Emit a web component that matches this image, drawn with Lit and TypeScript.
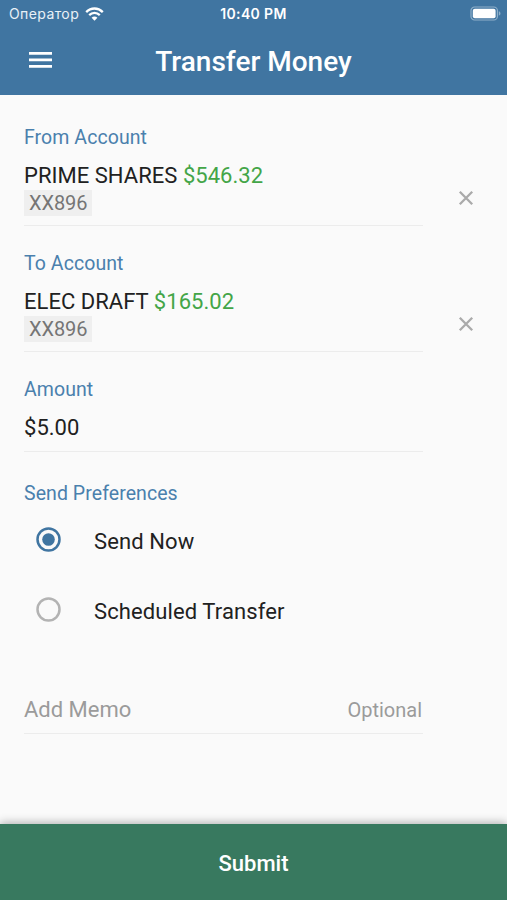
import { LitElement, html, css } from "lit";
import { customElement, state } from "lit/decorators.js";
import { classMap } from "lit/directives/class-map.js";

interface Account {
  label: string;
  name: string;
  balance: string;
  mask: string;
}

const accounts: Account[] = [
  { label: "From Account", name: "PRIME SHARES", balance: "$546.32", mask: "XX896" },
  { label: "To Account", name: "ELEC DRAFT", balance: "$165.02", mask: "XX896" },
];

const preferences = ["Send Now", "Scheduled Transfer"];

@customElement("app-root")
export class AppRoot extends LitElement {
  @state() private selected = 0;

  static styles = css`
    :host {
      display: flex;
      flex-direction: column;
      height: 900px;
      box-sizing: border-box;
      overflow: hidden;
      background: #fafafa;
      color: #212121;
      font-family: Roboto, "Liberation Sans", sans-serif;
    }
    svg { display: block; }
    .top { height: 95px; background: #4075a1; color: #fff; flex: none; }
    .status {
      display: grid;
      grid-template-columns: 1fr auto 1fr;
      align-items: center;
      height: 27px;
      padding: 0 6px;
      font: 400 13.5px/27px Inter, sans-serif;
    }
    .carrier { display: flex; align-items: center; gap: 6px; padding-left: 3px; color: #e9f1f7; }
    .carrier-name { font-size: 14px; letter-spacing: 0.4px; }
    .clock { font-weight: 600; font-size: 14px; letter-spacing: 0.35px; }
    .battery { justify-self: end; }
    .bar {
      display: grid;
      grid-template-columns: 80px 1fr 80px;
      align-items: center;
      height: 68px;
    }
    .menu { margin: -3px 0 0 29px; }
    .title {
      margin: 0;
      padding-top: 2px;
      text-align: center;
      font-size: 28px;
      line-height: 36px;
      font-weight: 500;
    }
    .form { flex: 1; padding: 31px 0 0 24px; }
    .row { display: flex; height: 126px; }
    .field { width: 399px; }
    .label {
      font-size: 19.5px;
      line-height: 24px;
      letter-spacing: 0.07px;
      color: #4a80ad;
    }
    .value { margin-top: 12px; font-size: 22px; line-height: 28px; letter-spacing: 0.03px; white-space: nowrap; }
    .money { color: #43a547; }
    .chip {
      display: block;
      width: 68px;
      height: 26px;
      box-sizing: border-box;
      padding-left: 5px;
      background: #efefef;
      color: #757575;
      font-size: 20px;
      line-height: 26px;
      letter-spacing: -0.1px;
    }
    .rule { height: 1px; margin-top: 9px; background: #ececec; }
    .clear { margin: 64px 0 0 35px; }
    .amount { height: 104px; }
    .option { display: flex; align-items: center; height: 70px; padding-left: 12px; }
    .options { margin: -1px 0 51px; }
    .radio { margin: -1px 33px 0 0; color: #b3b3b3; }
    .radio.on { color: #4075a1; }
    .dot { display: none; }
    .on .dot { display: block; }
    .option-text { font-size: 22px; line-height: 28px; padding-top: 3px; letter-spacing: 0.1px; }
    .memo { display: flex; justify-content: space-between; color: #9b9b9b; line-height: 28px; padding-right: 1px; }
    .memo-name { font-size: 22px; }
    .memo-hint { font-size: 20px; }
    .submit {
      flex: none;
      height: 76px;
      border: 0;
      padding: 3px 0 0;
      background: #38795f;
      box-shadow: 0 -1px 9px rgba(0, 0, 0, 0.32);
      color: #fff;
      font: 500 22px/28px Roboto, sans-serif;
    }
  `;

  private account(a: Account) {
    return html`
      <div class="row">
        <div class="field">
          <div class="label">${a.label}</div>
          <div class="value">${a.name} <span class="money">${a.balance}</span></div>
          <span class="chip">${a.mask}</span>
          <div class="rule"></div>
        </div>
        <svg class="clear" width="16" height="16" viewBox="0 0 16 16" fill="none" stroke="#aaa" stroke-width="2.3">
          <path d="M1.8 1.8 14.2 14.2M14.2 1.8 1.8 14.2" />
        </svg>
      </div>
    `;
  }

  render() {
    return html`
      <header class="top">
        <div class="status">
          <div class="carrier">
            <span class="carrier-name">Оператор</span>
            <svg width="19" height="14" viewBox="0 0 19 14" fill="none" stroke="#fff" stroke-width="2.3">
              <path d="M1.2 5.1C6 .3 13 .3 17.8 5.1" />
              <path d="M4.2 8.2C7.3 5.2 11.7 5.2 14.8 8.2" />
              <path d="M6.6 10.8C8.3 9.2 10.7 9.2 12.4 10.8L9.5 13.7Z" fill="#fff" stroke="none" />
            </svg>
          </div>
          <div class="clock">10:40 PM</div>
          <svg class="battery" width="31" height="15" viewBox="0 0 31 15">
            <rect x="1" y="1" width="26.4" height="13" rx="3.6" fill="none" stroke="#8fb0ca" stroke-width="1.2" />
            <rect x="2.8" y="2.8" width="22.8" height="9.4" rx="2" fill="#fff" />
            <path d="M28.8 5.3C31 6 31 9 28.8 9.7Z" fill="#8fb0ca" />
          </svg>
        </div>
        <div class="bar">
          <svg class="menu" width="23" height="16" viewBox="0 0 23 16" fill="#fff">
            <path d="M0 0H23V2.7H0ZM0 6.5H23V9.2H0ZM0 13H23V15.7H0Z" />
          </svg>
          <h1 class="title">Transfer Money</h1>
        </div>
      </header>
      <main class="form">
        ${accounts.map((a) => this.account(a))}
        <div class="field amount">
          <div class="label">Amount</div>
          <div class="value">$5.00</div>
          <div class="rule"></div>
        </div>
        <div class="label">Send Preferences</div>
        <div class="options">
          ${preferences.map(
            (p, i) => html`
              <div class="option" @click=${() => (this.selected = i)}>
                <svg class=${classMap({ radio: true, on: this.selected === i })} width="25" height="25" viewBox="0 0 25 25">
                  <circle cx="12.5" cy="12.5" r="11" fill="none" stroke="currentColor" stroke-width="2.5" />
                  <circle class="dot" cx="12.5" cy="12.5" r="6.3" fill="currentColor" />
                </svg>
                <span class="option-text">${p}</span>
              </div>
            `
          )}
        </div>
        <div class="field">
          <div class="memo">
            <span class="memo-name">Add Memo</span>
            <span class="memo-hint">Optional</span>
          </div>
          <div class="rule"></div>
        </div>
      </main>
      <button class="submit">Submit</button>
    `;
  }
}
